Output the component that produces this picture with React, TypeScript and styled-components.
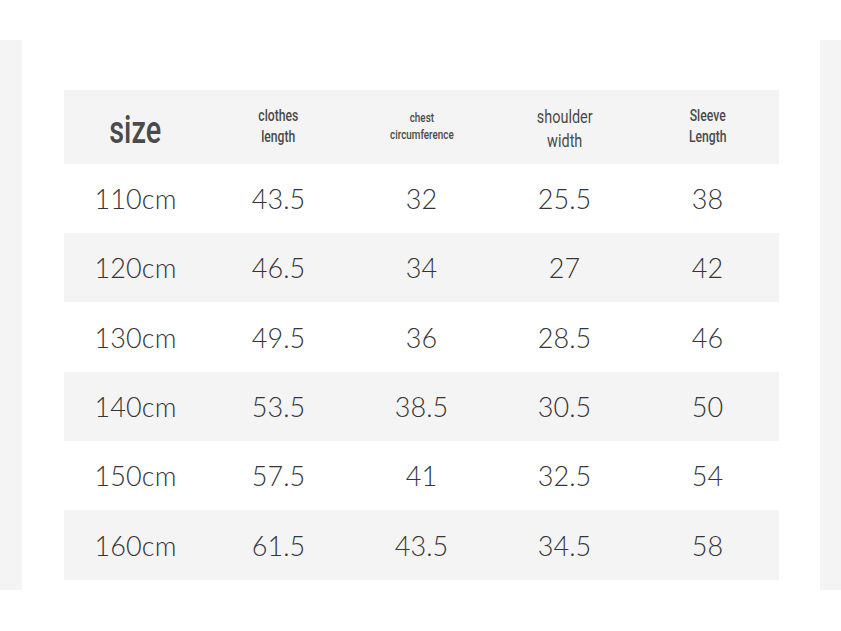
import React from "react";
import styled, { createGlobalStyle } from "styled-components";

const GlobalStyle = createGlobalStyle`
  html, body {
    margin: 0;
    padding: 0;
    background: #ffffff;
  }
`;

const Page = styled.div`
  width: 841px;
  height: 631px;
  padding-top: 40px;
  box-sizing: border-box;
  background: #ffffff;
`;

const Frame = styled.div`
  height: 550px;
  display: grid;
  grid-template-columns: 22px 1fr 21px;
`;

const SideStrip = styled.div`
  background: #f4f4f4;
`;

const Sheet = styled.div`
  background: #ffffff;
  padding: 50px 41px 0 42px;
`;

const Table = styled.div`
  display: flex;
  flex-direction: column;
  width: 715px;
`;

const Row = styled.div<{ $shaded: boolean; $height: number }>`
  display: grid;
  grid-template-columns: repeat(5, 1fr);
  height: ${(p) => p.$height}px;
  background: ${(p) => (p.$shaded ? "#f4f4f4" : "#ffffff")};
  align-items: center;
`;

const HeadCell = styled.div<{ $drop?: number }>`
  display: flex;
  justify-content: center;
  align-items: center;
  text-align: center;
  padding-top: ${(p) => p.$drop ?? 0}px;
`;

const HeadText = styled.span<{ $size: number; $weight?: number; $lh?: number }>`
  display: inline-block;
  font-family: "Roboto", "Liberation Sans", sans-serif;
  font-size: ${(p) => p.$size}px;
  font-weight: ${(p) => p.$weight ?? 500};
  line-height: ${(p) => p.$lh ?? 1.3};
  color: #4a4a4a;
  transform: scaleX(0.76);
  white-space: nowrap;
`;

const DataCell = styled.div`
  text-align: center;
  font-family: "Lato", "Liberation Sans", sans-serif;
  font-weight: 300;
  font-size: 27px;
  color: #353535;
  letter-spacing: 0.1px;
`;

const rows = [
  ["110cm", "43.5", "32", "25.5", "38"],
  ["120cm", "46.5", "34", "27", "42"],
  ["130cm", "49.5", "36", "28.5", "46"],
  ["140cm", "53.5", "38.5", "30.5", "50"],
  ["150cm", "57.5", "41", "32.5", "54"],
  ["160cm", "61.5", "43.5", "34.5", "58"],
];

const rowHeights = [69, 69, 70, 69, 69, 70];

export default function App() {
  return (
    <Page>
      <GlobalStyle />
      <Frame>
        <SideStrip />
        <Sheet>
          <Table>
            <Row $shaded $height={74}>
              <HeadCell $drop={8}>
                <HeadText $size={38} $weight={500}>size</HeadText>
              </HeadCell>
              <HeadCell>
                <HeadText $size={16}>
                  clothes
                  <br />
                  length
                </HeadText>
              </HeadCell>
              <HeadCell>
                <HeadText $size={13}>
                  chest
                  <br />
                  circumference
                </HeadText>
              </HeadCell>
              <HeadCell $drop={4}>
                <HeadText $size={19} $lh={1.25} $weight={400}>
                  shoulder
                  <br />
                  width
                </HeadText>
              </HeadCell>
              <HeadCell>
                <HeadText $size={16}>
                  Sleeve
                  <br />
                  Length
                </HeadText>
              </HeadCell>
            </Row>
            {rows.map((r, i) => (
              <Row key={r[0]} $shaded={i % 2 === 1} $height={rowHeights[i]}>
                {r.map((v, j) => (
                  <DataCell key={j}>{v}</DataCell>
                ))}
              </Row>
            ))}
          </Table>
        </Sheet>
        <SideStrip />
      </Frame>
    </Page>
  );
}
